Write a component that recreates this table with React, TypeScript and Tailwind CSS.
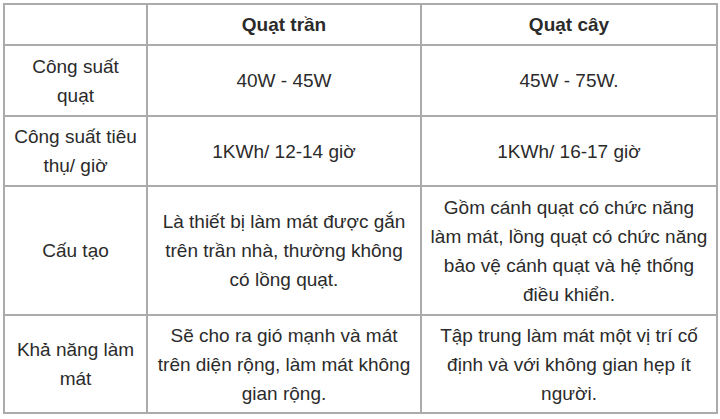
import React from "react";

const rows: { label: string[]; a: string; b: string; h: string }[] = [];

export default function App() {
  const cell =
    "border-2 border-[#ababab] px-[8px] py-0 text-center align-middle";
  return (
    <div
      className="bg-white w-[720px] h-[419px] pl-[3px] pt-[3px] text-[#2b2b2b] text-[19px] leading-[29px]"
      style={{ fontFamily: '"Liberation Sans", Arial, sans-serif' }}
    >
      <table className="w-[713px] table-fixed border-collapse">
        <colgroup>
          <col className="w-[143px]" />
          <col className="w-[274px]" />
          <col className="w-[296px]" />
        </colgroup>
        <tbody>
          <tr className="h-[41px]">
            <td className={cell}></td>
            <td className={`${cell} font-bold`}>Quạt trần</td>
            <td className={`${cell} font-bold`}>Quạt cây</td>
          </tr>
          <tr className="h-[71px]">
            <td className={cell}>Công suất quạt</td>
            <td className={cell}>40W - 45W</td>
            <td className={cell}>45W - 75W.</td>
          </tr>
          <tr className="h-[70px]">
            <td className={cell}>Công suất tiêu thụ/ giờ</td>
            <td className={cell}>1KWh/ 12-14 giờ</td>
            <td className={cell}>1KWh/ 16-17 giờ</td>
          </tr>
          <tr className="h-[129px]">
            <td className={cell}>Cấu tạo</td>
            <td className={cell}>
              Là thiết bị làm mát được gắn trên trần nhà, thường không có lồng
              quạt.
            </td>
            <td className={cell}>
              Gồm cánh quạt có chức năng làm mát, lồng quạt có chức năng bảo vệ
              cánh quạt và hệ thống điều khiển.
            </td>
          </tr>
          <tr className="h-[98px]">
            <td className={cell}>Khả năng làm mát</td>
            <td className={cell}>
              Sẽ cho ra gió mạnh và mát trên diện rộng, làm mát không gian
              rộng.
            </td>
            <td className={cell}>
              Tập trung làm mát một vị trí cố định và với không gian hẹp ít
              người.
            </td>
          </tr>
        </tbody>
      </table>
    </div>
  );
}
